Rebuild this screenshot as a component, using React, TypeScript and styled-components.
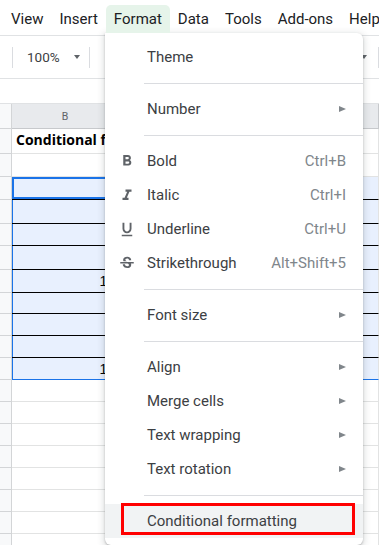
import React from "react";
import styled, { createGlobalStyle } from "styled-components";
import {
  MdFormatBold,
  MdFormatItalic,
  MdFormatUnderlined,
  MdStrikethroughS,
} from "react-icons/md";

const GlobalStyle = createGlobalStyle`
  html, body { margin: 0; padding: 0; background: #fff; }
  body { font-family: Roboto, "Liberation Sans", sans-serif; overflow: hidden; }
`;

const Page = styled.div`
  position: relative;
  width: 379px;
  height: 545px;
  overflow: hidden;
  background: #fff;
`;

const MenuBar = styled.div`
  display: flex;
  align-items: flex-start;
  height: 35px;
  padding-left: 3px;
  border-bottom: 1px solid #e0e2e4;
`;

const MenuBarItem = styled.div<{ $active?: boolean }>`
  position: relative;
  z-index: ${(p) => (p.$active ? 3 : 0)};
  margin-top: 5px;
  height: 28px;
  line-height: 28px;
  padding: 0 8px;
  font-size: 15px;
  color: #202124;
  white-space: nowrap;
  border-radius: 5px 5px 0 0;
  background: ${(p) => (p.$active ? "#e6f4ea" : "transparent")};
`;

const Toolbar = styled.div`
  display: flex;
  align-items: center;
  height: 42px;
  padding-left: 12px;
  border-bottom: 1px solid #e0e2e4;
`;

const ToolSep = styled.div<{ $gap?: number }>`
  flex: none;
  width: 1px;
  height: 21px;
  margin-left: ${(p) => p.$gap ?? 0}px;
  background: #dadce0;
`;

const ZoomText = styled.span`
  margin-left: 14px;
  font-size: 13.5px;
  color: #3c4043;
`;

const Caret = styled.span<{ $gap: number; $push?: boolean }>`
  flex: none;
  margin-left: ${(p) => (p.$push ? "auto" : `${p.$gap}px`)};
  width: 0;
  height: 0;
  border-left: 3.5px solid transparent;
  border-right: 3.5px solid transparent;
  border-top: 4px solid #5f6368;
`;

const FormulaRow = styled.div`
  height: 24px;
  border-bottom: 1px solid #e0e2e4;
`;

const Row = styled.div<{ $h: number }>`
  display: flex;
  height: ${(p) => p.$h}px;
`;

const RowHead = styled.div`
  flex: none;
  width: 12px;
  box-sizing: border-box;
  background: #f8f9fa;
  border-right: 1px solid #d3d5d7;
  border-bottom: 1px solid #d3d5d7;
`;

type Tone = "head" | "plain" | "sel";

const Cell = styled.div<{
  $w?: number;
  $tone: Tone;
  $line?: string;
  $active?: boolean;
  $edge?: boolean;
  $start?: boolean;
}>`
  box-sizing: border-box;
  flex: ${(p) => (p.$w ? `0 0 ${p.$w}px` : "1 1 auto")};
  min-width: 0;
  display: flex;
  align-items: center;
  justify-content: ${(p) =>
    p.$tone === "head" ? "center" : p.$start ? "flex-start" : "flex-end"};
  padding: 0 3px;
  white-space: nowrap;
  border-right: 1px solid ${(p) => (p.$tone === "head" ? "#c7c9cc" : "#e2e3e3")};
  border-bottom: 1px solid ${(p) => p.$line ?? "#e2e3e3"};
  background: ${(p) =>
    p.$tone === "head" ? "#e8eaed" : p.$tone === "sel" ? "#e8f0fe" : "#fff"};
  box-shadow: ${(p) =>
    p.$active
      ? "inset 0 0 0 2px #1a73e8"
      : p.$edge
      ? "inset 1px 0 0 #1a73e8"
      : "none"};
  font-family: "Liberation Sans", Arial, sans-serif;
  font-size: 14px;
  color: #000;
`;

const HeadLabel = styled.span`
  font-family: Roboto, sans-serif;
  font-size: 10.5px;
  color: #5f6368;
`;

const TitleText = styled.span`
  align-self: flex-end;
  padding: 0 0 4px 1px;
  font-family: "Open Sans", sans-serif;
  font-weight: 700;
  font-size: 14px;
  color: #000;
`;

const Dropdown = styled.div`
  position: absolute;
  top: 33px;
  left: 105px;
  width: 258px;
  padding: 7px 0;
  background: #fff;
  border-radius: 0 6px 6px 6px;
  box-shadow: 0 2px 6px 2px rgba(60, 64, 67, 0.15),
    0 1px 2px rgba(60, 64, 67, 0.3);
  z-index: 2;
`;

const Item = styled.div<{ $hl?: boolean }>`
  position: relative;
  display: flex;
  align-items: center;
  height: 34px;
  padding: 0 17px 0 13px;
  font-size: 15px;
  color: #3c4043;
  background: ${(p) => (p.$hl ? "#f1f3f4" : "transparent")};
`;

const IconSlot = styled.span`
  flex: none;
  display: flex;
  align-items: center;
  justify-content: center;
  width: 18px;
  height: 18px;
  margin-right: 11px;
  color: #5f6368;
`;

const Label = styled.span`
  flex: 1;
  white-space: nowrap;
`;

const Shortcut = styled.span`
  color: #80868b;
  white-space: nowrap;
`;

const SubArrow = styled.span`
  width: 0;
  height: 0;
  border-top: 3.5px solid transparent;
  border-bottom: 3.5px solid transparent;
  border-left: 7px solid #80868b;
`;

const Divider = styled.div`
  height: 1px;
  margin: 9px 0 8px 39px;
  background: #dadce0;
`;

const RedBox = styled.div`
  position: absolute;
  top: -1px;
  bottom: 3px;
  left: 16px;
  right: 8px;
  border: 3px solid #ff0000;
  pointer-events: none;
`;

type MenuEntry =
  | { kind: "div" }
  | {
      kind: "item";
      label: string;
      icon?: React.ReactNode;
      shortcut?: string;
      sub?: boolean;
      hl?: boolean;
    };

const menu: MenuEntry[] = [
  { kind: "item", label: "Theme" },
  { kind: "div" },
  { kind: "item", label: "Number", sub: true },
  { kind: "div" },
  { kind: "item", label: "Bold", icon: <MdFormatBold size={20} />, shortcut: "Ctrl+B" },
  { kind: "item", label: "Italic", icon: <MdFormatItalic size={19} />, shortcut: "Ctrl+I" },
  { kind: "item", label: "Underline", icon: <MdFormatUnderlined size={19} />, shortcut: "Ctrl+U" },
  {
    kind: "item",
    label: "Strikethrough",
    icon: <MdStrikethroughS size={19} />,
    shortcut: "Alt+Shift+5",
  },
  { kind: "div" },
  { kind: "item", label: "Font size", sub: true },
  { kind: "div" },
  { kind: "item", label: "Align", sub: true },
  { kind: "item", label: "Merge cells", sub: true },
  { kind: "item", label: "Text wrapping", sub: true },
  { kind: "item", label: "Text rotation", sub: true },
  { kind: "div" },
  { kind: "item", label: "Conditional formatting", hl: true },
];

const topMenus = ["View", "Insert", "Format", "Data", "Tools", "Add-ons", "Help"];

const selHeights = [23, 24, 22, 24, 23, 21, 22, 22, 22];
const selValues = [5, 8, 3, 7, 12, 4, 9, 6, 15];

export default function App() {
  return (
    <Page>
      <GlobalStyle />
      <MenuBar>
        {topMenus.map((m) => (
          <MenuBarItem key={m} $active={m === "Format"}>
            {m}
          </MenuBarItem>
        ))}
      </MenuBar>

      <Toolbar>
        <ToolSep />
        <ZoomText>100%</ZoomText>
        <Caret $gap={14} />
        <ToolSep $gap={9} />
        <Caret $gap={0} $push />
        <ToolSep $gap={11} />
      </Toolbar>

      <FormulaRow />

      <Row $h={25}>
        <RowHead />
        <Cell $w={107} $tone="head" $line="#c7c9cc">
          <HeadLabel>B</HeadLabel>
        </Cell>
        <Cell $tone="head" $line="#c7c9cc" />
      </Row>

      <Row $h={25}>
        <RowHead />
        <Cell $w={107} $tone="plain" $start>
          <TitleText>Conditional formatting</TitleText>
        </Cell>
        <Cell $tone="plain" />
      </Row>

      <Row $h={23}>
        <RowHead />
        <Cell $w={107} $tone="plain" />
        <Cell $tone="plain" />
      </Row>

      {selHeights.map((h, i) => {
        const last = i === selHeights.length - 1;
        const line = last ? "#1a73e8" : "#000";
        return (
          <Row key={i} $h={h}>
            <RowHead />
            <Cell $w={107} $tone="sel" $line={line} $active={i === 0} $edge>
              {selValues[i]}
            </Cell>
            <Cell $tone="sel" $line={line} />
          </Row>
        );
      })}

      {Array.from({ length: 8 }).map((_, i) => (
        <Row key={`r${i}`} $h={22}>
          <RowHead />
          <Cell $w={107} $tone="plain" />
          <Cell $tone="plain" />
        </Row>
      ))}

      <Dropdown>
        {menu.map((e, i) =>
          e.kind === "div" ? (
            <Divider key={i} />
          ) : (
            <Item key={i} $hl={e.hl}>
              <IconSlot>{e.icon}</IconSlot>
              <Label>{e.label}</Label>
              {e.shortcut && <Shortcut>{e.shortcut}</Shortcut>}
              {e.sub && <SubArrow />}
              {e.hl && <RedBox />}
            </Item>
          )
        )}
      </Dropdown>
    </Page>
  );
}
